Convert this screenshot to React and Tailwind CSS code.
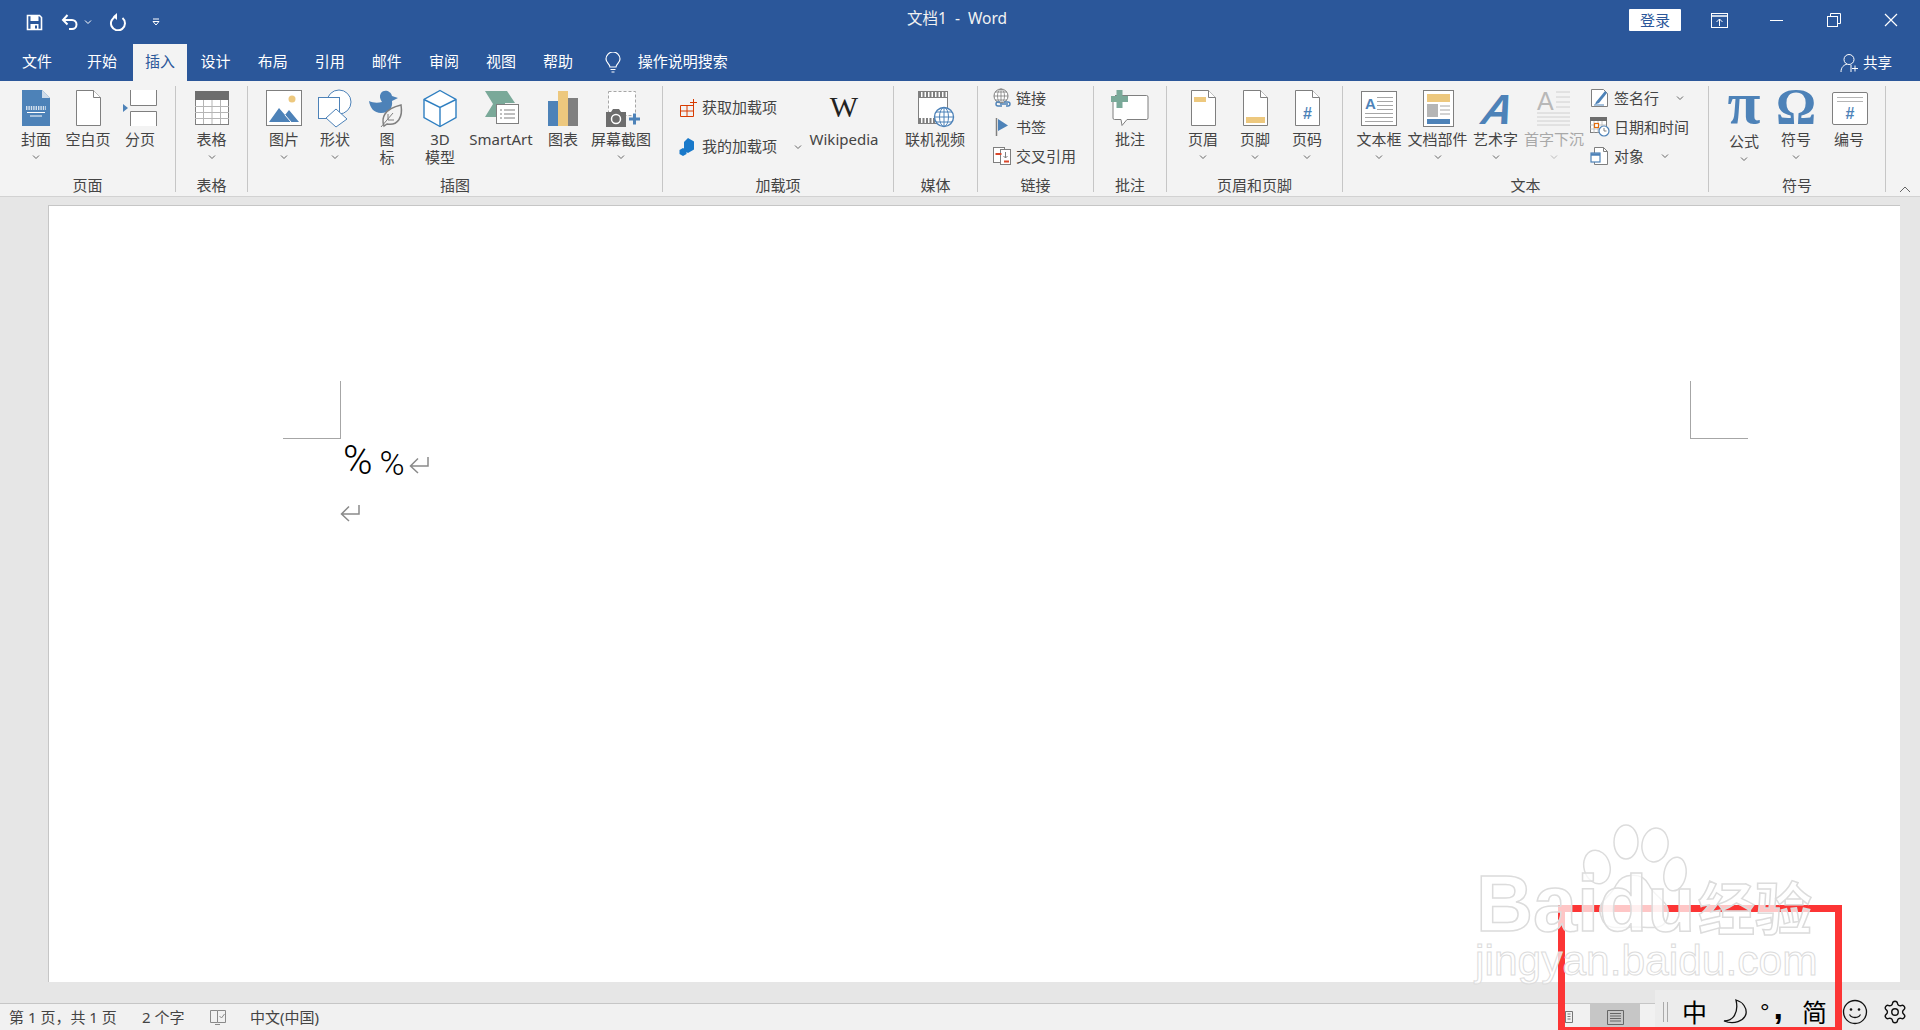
import React from "react";
import { Settings } from "lucide-react";

const BLUE = "#4d82b8";
const GRAY = "#7f7f7f";
const YELLOW = "#edc87e";
const GREEN = "#7aa999";

const tabs = ["设计", "布局", "引用", "邮件", "审阅", "视图", "帮助"];

const Svg = ({ size = 40, children }) => (
  <svg width={size} height={size} viewBox={`0 0 ${size} ${size}`} fill="none" className="shrink-0 overflow-visible">
    {children}
  </svg>
);

const Page = ({ fill = "#fff" }) => (
  <>
    <path d="M8.5 2.5h17l7 7v28h-24z" fill={fill} stroke={GRAY} />
    <path d="M25.5 2.5v7h7" fill="#fff" stroke={GRAY} />
  </>
);

const CoverIcon = () => (
  <Svg>
    <path d="M6 2h20l8 8v28H6z" fill={BLUE} />
    <path d="M26 2l8 8h-8z" fill="#cfdcea" />
    <path d="M10 19h20M10 21h20" stroke="#fff" strokeWidth="1.4" strokeDasharray="1.4 1" />
    <path d="M11 24.5h18M14 28h12" stroke="#fff" />
  </Svg>
);
const BlankIcon = () => <Svg><Page /></Svg>;
const BreakIcon = () => (
  <Svg>
    <path d="M10.5 2v15.5h26V2M10.5 38V23.5h26V38" fill="#fff" stroke={GRAY} />
    <path d="M3 16l5 4-5 4z" fill={BLUE} />
  </Svg>
);
const TableIcon = () => (
  <Svg>
    <rect x="3.5" y="3.5" width="33" height="33" fill="#fff" stroke={GRAY} />
    <rect x="3" y="3" width="34" height="9" fill="#6d6d6d" />
    <path d="M3 18.5h34M3 24.5h34M3 30.5h34M11.5 12v24M20 12v24M28.5 12v24" stroke="#b5b5b5" />
  </Svg>
);
const PictureIcon = () => (
  <Svg>
    <rect x="2.5" y="2.5" width="35" height="35" fill="#fff" stroke={GRAY} />
    <circle cx="28" cy="11" r="3.5" fill={YELLOW} />
    <path d="M5 34l10-14 6 7 4-5 10 12z" fill={BLUE} />
    <path d="M21 27l6 7" stroke="#fff" />
  </Svg>
);
const ShapesIcon = () => (
  <Svg>
    <circle cx="24" cy="14" r="12" fill="#fff" stroke={BLUE} />
    <rect x="3.5" y="9.5" width="21" height="21" fill="#fff" stroke={BLUE} />
    <path d="M21 21l11 10-11 8-10-9z" fill="#fff" stroke={BLUE} />
  </Svg>
);
const IconsIcon = () => (
  <Svg>
    <path d="M2 13c1 7 5 12 12 12 8 0 12-5 11-12l6-3-6-2c-1-5-8-7-11-3-2 3-1 6 1 9-4 1-9 1-13-1z" fill={BLUE} />
    <path d="M17 38c-3-8 0-17 17-21 2 12-3 21-14 19z" fill="#f3f3f3" stroke={GRAY} strokeWidth="1.5" />
    <path d="M14 39l12-14M21 32v-6M21 32h6" stroke={GRAY} />
  </Svg>
);
const CubeIcon = () => (
  <Svg>
    <path d="M20 2.5l16 9v18l-16 9-16-9v-18z" fill="#fff" stroke="#2f7fc1" strokeWidth="1.4" />
    <path d="M4 11.5l16 8 16-8M20 19.5v19" stroke="#2f7fc1" strokeWidth="1.4" />
  </Svg>
);
const SmartArtIcon = () => (
  <Svg>
    <path d="M4 3h22l8 12H24v14H4l8-13z" fill={GREEN} />
    <rect x="15.5" y="16.5" width="22" height="19" fill="#fff" stroke={GRAY} />
    <path d="M19 22h2M23 22h11M19 26h2M23 26h11M19 30h2M23 30h11" stroke={GRAY} />
  </Svg>
);
const ChartIcon = () => (
  <Svg>
    <rect x="5" y="13" width="10" height="25" fill={BLUE} />
    <rect x="15" y="3" width="10" height="35" fill={YELLOW} />
    <rect x="25" y="10" width="10" height="28" fill={GRAY} />
  </Svg>
);
const ScreenshotIcon = () => (
  <Svg>
    <rect x="7.5" y="3.5" width="27" height="24" fill="#fff" stroke="#a6a6a6" strokeDasharray="3 2" />
    <path d="M5 24h5l2-3h6l2 3h5v15H5z" fill="#6d6d6d" />
    <circle cx="15" cy="31" r="4.5" fill="#6d6d6d" stroke="#fff" strokeWidth="1.5" />
    <path d="M28 31h11M33.5 25.5v11" stroke={BLUE} strokeWidth="3" />
  </Svg>
);
const MediaIcon = () => (
  <Svg>
    <rect x="3.5" y="3.5" width="29" height="32" fill="#fff" stroke={GRAY} />
    <path d="M4 6.5h28M4 32.5h17" stroke={GRAY} strokeWidth="5" strokeDasharray="2 1.5" />
    <path d="M4 9.5h28" stroke={GRAY} />
    <circle cx="29" cy="29" r="9.5" fill="#fff" stroke={BLUE} strokeWidth="1.4" />
    <path d="M19.5 29h19M21 24h16M21 34h16M29 19.5v19" stroke={BLUE} />
    <ellipse cx="29" cy="29" rx="4.5" ry="9.5" stroke={BLUE} />
  </Svg>
);
const CommentIcon = () => (
  <Svg>
    <path d="M5 7.5h31.5a1.5 1.5 0 0 1 1.5 1.5v21a1.5 1.5 0 0 1-1.5 1.5H17l-5 6-1-6H4.5a1.5 1.5 0 0 1-1.5-1.5V9" fill="#fff" stroke={GRAY} />
    <path d="M1 11h17M9.5 2v18" stroke={GREEN} strokeWidth="6" />
  </Svg>
);
const HeaderIcon = () => (
  <Svg>
    <Page />
    <rect x="11" y="9" width="12" height="5" fill={YELLOW} />
  </Svg>
);
const FooterIcon = () => (
  <Svg>
    <Page />
    <rect x="11" y="29" width="19" height="6" fill={YELLOW} />
  </Svg>
);
const PageNumIcon = () => (
  <Svg>
    <Page />
    <text x="20.5" y="31" textAnchor="middle" fontSize="16" fontWeight="700" fill={BLUE} fontFamily="Liberation Sans">#</text>
  </Svg>
);
const TextBoxIcon = () => (
  <Svg>
    <rect x="2.5" y="3.5" width="35" height="34" fill="#fff" stroke={GRAY} />
    <text x="6" y="21" fontSize="15" fontWeight="700" fill={BLUE} fontFamily="Liberation Sans">A</text>
    <path d="M18 9.5h16M18 13.5h16M18 17.5h16M18 21.5h16M6 25.5h28M6 29.5h28M6 33.5h28" stroke="#a6a6a6" />
  </Svg>
);
const DocPartsIcon = () => (
  <Svg>
    <rect x="5.5" y="2.5" width="30" height="36" fill="#fff" stroke={GRAY} />
    <rect x="9" y="6" width="23" height="8" fill={YELLOW} />
    <rect x="9" y="16" width="11" height="13" fill="#b5b5b5" />
    <path d="M22 18h10M22 22h10M22 26h10" stroke="#a6a6a6" />
    <rect x="9" y="31" width="23" height="5" fill={BLUE} />
  </Svg>
);
const WordArtIcon = () => (
  <Svg>
    <text x="0" y="0" transform="translate(19 36) skewX(-12)" textAnchor="middle" fontSize="42" fontWeight="700" fontStyle="italic" fill={BLUE} fontFamily="Liberation Sans">A</text>
  </Svg>
);
const DropCapIcon = () => (
  <Svg>
    <text x="3" y="22" fontSize="25" fontWeight="400" fill="#b8b8b8" fontFamily="Liberation Sans">A</text>
    <path d="M22 4h14M22 9h14M22 14h14M22 19h14M3 25h33M3 29h33M3 33h33M3 37h33" stroke="#d0d0d0" />
  </Svg>
);
const PiIcon = () => (
  <Svg>
    <text x="20" y="35" textAnchor="middle" fontSize="60" fontWeight="700" fill={BLUE} fontFamily="Liberation Serif">π</text>
  </Svg>
);
const OmegaIcon = () => (
  <Svg>
    <text x="20" y="35" textAnchor="middle" fontSize="50" fontWeight="700" fill={BLUE} fontFamily="Liberation Serif">Ω</text>
  </Svg>
);
const NumberIcon = () => (
  <Svg>
    <rect x="3.5" y="4.5" width="35" height="32" rx="1.5" fill="#fff" stroke={GRAY} />
    <path d="M8 9.5h26M8 13.5h26" stroke="#b5b5b5" />
    <text x="21" y="31" textAnchor="middle" fontSize="16" fontWeight="700" fill={BLUE} fontFamily="Liberation Sans">#</text>
  </Svg>
);

const AddinIcon = () => (
  <Svg size={20}>
    <path d="M2.5 7.5h13v11h-13zM9 7.5v11M2.5 13h13" stroke="#d83b01" />
    <path d="M12 4.5h7M15.5 1v7" stroke="#d83b01" />
  </Svg>
);
const MyAddinIcon = () => (
  <Svg size={20}>
    <path d="M10 1l6 3.5v8l-6 3.5-4-2.3V5z" fill="#1979ca" />
    <path d="M5 11l3.5 2v4L5 19l-3.5-2v-4z" fill="#1979ca" />
  </Svg>
);
const LinkIcon = () => (
  <Svg size={20}>
    <circle cx="9" cy="8" r="7" fill="#fff" stroke={GRAY} />
    <path d="M2 8h14M3 4h12M3 12h12M9 1v14" stroke={GRAY} strokeWidth="0.8" />
    <ellipse cx="9" cy="8" rx="3.5" ry="7" stroke={GRAY} strokeWidth="0.8" />
    <path d="M8 14h-2a2 2 0 0 0 0 4h4M12 14h4a2 2 0 0 1 0 4h-2M8 16h8" stroke={BLUE} strokeWidth="1.4" />
  </Svg>
);
const BookmarkIcon = () => (
  <Svg size={20}>
    <path d="M4.5 1v18" stroke={GRAY} strokeWidth="1.5" />
    <path d="M6 2l10 6.5L6 14z" fill={BLUE} />
  </Svg>
);
const CrossRefIcon = () => (
  <Svg size={20}>
    <rect x="1.5" y="1.5" width="11" height="15" fill="#fff" stroke={GRAY} />
    <rect x="8.5" y="3.5" width="10" height="15" fill="#fff" stroke={GRAY} />
    <rect x="3.5" y="7" width="6" height="2" fill="#d9472b" />
    <rect x="12" y="14.5" width="5" height="2" fill="#d9472b" />
    <path d="M13.5 6v6M11.5 10l2 2 2-2" stroke={GRAY} />
  </Svg>
);
const SignatureIcon = () => (
  <Svg size={20}>
    <path d="M1.5 1.5h12l4 4v13h-16z" fill="#fff" stroke={GRAY} />
    <path d="M6 14L15 3l2 2-8 10-4 1.5z" fill={BLUE} />
    <path d="M4 17h10" stroke={BLUE} />
  </Svg>
);
const DateIcon = () => (
  <Svg size={20}>
    <rect x="0.5" y="0.5" width="16" height="15" fill="#fff" stroke={GRAY} />
    <rect x="0" y="0" width="17" height="4" fill="#6d6d6d" />
    <path d="M0 8h16M0 12h16M4 4v12M8 4v12M12 4v12" stroke="#b5b5b5" strokeWidth="0.8" />
    <rect x="4.5" y="6.5" width="4" height="4" fill="#fff" stroke="#e26b0a" strokeWidth="1.2" />
    <circle cx="14" cy="14" r="5" fill="#fff" stroke={BLUE} strokeWidth="1.2" />
    <path d="M14 11v3h2.5" stroke={GRAY} />
  </Svg>
);
const ObjectIcon = () => (
  <Svg size={20}>
    <path d="M4.5 1.5h9l4 4v13h-13z" fill="#fff" stroke={GRAY} />
    <path d="M13.5 1.5v4h4" stroke={GRAY} />
    <rect x="1" y="7" width="9" height="9" fill="#fff" stroke={BLUE} strokeWidth="1.2" />
    <path d="M1 8.5h9" stroke={BLUE} strokeWidth="2.5" />
  </Svg>
);

const Chevron = ({ className = "", color = "#666" }) => (
  <svg width="8" height="6" viewBox="0 0 8 6" fill="none" className={className}>
    <path d="M1 1.5l3 3 3-3" stroke={color} />
  </svg>
);

const RibbonItem = ({ w, icon, label, chevron, disabled, labelClass = "mt-[2px]" }) => (
  <div
    style={{ width: w }}
    className={`flex flex-col items-center shrink-0 pt-[2px] ${disabled ? "text-[#a8a8a8]" : ""}`}
  >
    {icon}
    <div className={`text-center leading-[18px] whitespace-nowrap ${labelClass}`}>
      {label.split("\n").map((line) => (
        <div key={line}>{line}</div>
      ))}
    </div>
    {chevron && <Chevron className="mt-[6px]" color={disabled ? "#bbb" : "#666"} />}
  </div>
);

const SmallItem = ({ icon, label, chevron, className = "h-6" }) => (
  <div className={`flex items-center gap-1 whitespace-nowrap ${className}`}>
    <span className="w-5 flex justify-center">{icon}</span>
    <span>{label}</span>
    {chevron && <Chevron className="ml-[13px]" />}
  </div>
);

const Group = ({ w, title, children, className = "" }) => (
  <div
    style={{ width: w }}
    className="flex flex-col shrink-0 h-[106px] mt-[5px] border-r border-[#c6c6c6]"
  >
    <div className={`flex-1 flex min-h-0 ${className}`}>{children}</div>
    <div className="h-[14px] leading-[14px] text-center whitespace-nowrap">{title}</div>
  </div>
);

const TitleBar = () => (
  <div className="h-11 grid grid-cols-[1fr_auto_1fr] text-white">
    <div className="flex items-center pl-[26px]">
      {/* quick access */}
      <svg width="17" height="17" viewBox="0 0 17 17" fill="none">
        <path d="M1.5 1.5h12l2 2v12h-14z" stroke="#fff" strokeWidth="1.6" />
        <rect x="4.5" y="2" width="8" height="5" fill="#fff" />
        <rect x="4.5" y="10" width="8" height="5" fill="#fff" />
        <rect x="9" y="11.5" width="2" height="3" fill="#2b579a" />
      </svg>
      <svg className="ml-[18px]" width="18" height="18" viewBox="0 0 18 18" fill="none">
        <path d="M2 7h9a4.5 4.5 0 0 1 0 9H8" stroke="#fff" strokeWidth="2" />
        <path d="M6.5 2L2 7l4.500 4.500" stroke="#fff" strokeWidth="2" />
      </svg>
      <Chevron className="ml-[5px]" color="#fff" />
      <svg className="ml-[17px]" width="18" height="18" viewBox="0 0 18 18" fill="none">
        <path d="M7.5 3.5a7 7 0 1 0 6 1.5" stroke="#fff" strokeWidth="2" />
        <path d="M8 0v7L4 3.5z" fill="#fff" />
      </svg>
      <svg className="ml-[25px]" width="8" height="8" viewBox="0 0 8 8" fill="none">
        <path d="M1 1h6M1 3.5h6l-3 3.5z" stroke="#fff" />
      </svg>
    </div>
    <div className="flex items-center text-[15.5px] pb-[7px] whitespace-pre text-[#f2f2f2] -ml-[3px] mr-[3px]">文档1  -  Word</div>
    <div className="flex items-center justify-end">
      <div className="w-[52px] h-[22px] bg-white rounded-[1px] text-[#2b579a] text-[15px] leading-[22px] text-center mb-[4px]">
        登录
      </div>
      <div className="w-[57px] flex justify-center ml-[10px] mb-[4px]">
        <svg width="17" height="15" viewBox="0 0 17 15" fill="none">
          <rect x="0.5" y="0.5" width="16" height="14" stroke="#fff" />
          <path d="M1 3h15" stroke="#fff" strokeWidth="1.5" />
          <path d="M8.5 13V6M5.5 9l3-3 3 3" stroke="#fff" />
        </svg>
      </div>
      <div className="w-[57px] flex justify-center mb-[4px]">
        <div className="w-[13px] h-px bg-white" />
      </div>
      <div className="w-[57px] flex justify-center mb-[4px]">
        <svg width="14" height="14" viewBox="0 0 14 14" fill="none">
          <rect x="0.5" y="3.5" width="10" height="10" stroke="#fff" />
          <path d="M3.5 3.5v-3h10v10h-3" stroke="#fff" />
        </svg>
      </div>
      <div className="w-[58px] flex justify-center mb-[4px]">
        <svg width="14" height="14" viewBox="0 0 14 14" fill="none">
          <path d="M1 1l12 12M13 1L1 13" stroke="#fff" strokeWidth="1.2" />
        </svg>
      </div>
    </div>
  </div>
);

const TabBar = () => (
  <div className="h-[37px] flex text-white text-[15px] leading-[35px]">
    <div className="w-[74px] text-center">文件</div>
    <div className="w-[59px] pr-[3px] text-center">开始</div>
    <div className="w-[54px] text-center bg-[#f3f3f3] text-[#2b579a]">插入</div>
    {tabs.map((t) => (
      <div key={t} className="w-[57.1px] text-center">
        {t}
      </div>
    ))}
    <div className="flex items-center ml-[18px] mr-[17px]">
      <svg width="16" height="22" viewBox="0 0 16 22" fill="none">
        <path d="M5 15c0-3-4-4-4-8a7 7 0 0 1 14 0c0 4-4 5-4 8z" stroke="#fff" strokeWidth="1.2" />
        <path d="M5.5 17.5h5M6.5 20h3" stroke="#fff" strokeWidth="1.2" />
      </svg>
    </div>
    <div>操作说明搜索</div>
    <div className="ml-auto flex items-center pr-[28px]">
      <svg width="20" height="20" viewBox="0 0 20 20" fill="none" className="mr-[3px]">
        <circle cx="9" cy="6.5" r="5" stroke="#fff" />
        <path d="M1 19c0-5 3-7 6-8M11 12v7M15 12.5v6M12 15.5h6" stroke="#fff" />
      </svg>
      <span className="text-[14.5px]">共享</span>
    </div>
  </div>
);

const Ribbon = () => (
  <div className="h-[116px] bg-[#f3f3f3] border-b border-[#d2d2d2] flex text-[#444] text-[15px] relative shrink-0">
    <Group w={176} title="页面" className="pl-[10px]">
      <RibbonItem w={52} icon={<CoverIcon />} label="封面" chevron />
      <RibbonItem w={52} icon={<BlankIcon />} label="空白页" />
      <RibbonItem w={52} icon={<BreakIcon />} label="分页" />
    </Group>
    <Group w={72} title="表格">
      <RibbonItem w={71} icon={<TableIcon />} label="表格" chevron />
    </Group>
    <Group w={415} title="插图" className="pl-[11px]">
      <RibbonItem w={50} icon={<PictureIcon />} label="图片" chevron />
      <RibbonItem w={52} icon={<ShapesIcon />} label="形状" chevron />
      <RibbonItem w={52} icon={<IconsIcon />} label={"图\n标"} />
      <RibbonItem w={54} icon={<CubeIcon />} label={"3D\n模型"} />
      <RibbonItem w={68} icon={<SmartArtIcon />} label="SmartArt" />
      <RibbonItem w={56} icon={<ChartIcon />} label="图表" />
      <RibbonItem w={60} icon={<ScreenshotIcon />} label="屏幕截图" chevron />
    </Group>
    <Group w={231} title="加载项">
      <div className="w-[143px] shrink-0 pl-[15px] pt-[2px]">
        <SmallItem className="h-[39px]" icon={<AddinIcon />} label="获取加载项" />
        <SmallItem className="h-[39px]" icon={<MyAddinIcon />} label="我的加载项" chevron />
      </div>
      <RibbonItem
        w={76}
        icon={
          <Svg>
            <text x="20" y="29" textAnchor="middle" fontSize="30" fill="#222" fontFamily="Liberation Serif">W</text>
          </Svg>
        }
        label="Wikipedia"
      />
    </Group>
    <Group w={84} title="媒体">
      <RibbonItem w={82} icon={<MediaIcon />} label="联机视频" />
    </Group>
    <Group w={116} title="链接">
      <div className="flex flex-col gap-[5px] pl-[14px]">
        <SmallItem icon={<LinkIcon />} label="链接" />
        <SmallItem icon={<BookmarkIcon />} label="书签" />
        <SmallItem icon={<CrossRefIcon />} label="交叉引用" />
      </div>
    </Group>
    <Group w={73} title="批注">
      <RibbonItem w={72} icon={<CommentIcon />} label="批注" />
    </Group>
    <Group w={176} title="页眉和页脚" className="pl-[10px]">
      <RibbonItem w={52} icon={<HeaderIcon />} label="页眉" chevron />
      <RibbonItem w={52} icon={<FooterIcon />} label="页脚" chevron />
      <RibbonItem w={52} icon={<PageNumIcon />} label="页码" chevron />
    </Group>
    <Group w={366} title="文本" className="pl-[7px]">
      <RibbonItem w={58} icon={<TextBoxIcon />} label="文本框" chevron />
      <RibbonItem w={59} icon={<DocPartsIcon />} label="文档部件" chevron />
      <RibbonItem w={57} icon={<WordArtIcon />} label="艺术字" chevron />
      <RibbonItem w={60} icon={<DropCapIcon />} label="首字下沉" chevron disabled />
      <div className="flex flex-col gap-[5px] pl-[6px]">
        <SmallItem icon={<SignatureIcon />} label="签名行" chevron />
        <SmallItem icon={<DateIcon />} label="日期和时间" />
        <SmallItem icon={<ObjectIcon />} label="对象" chevron />
      </div>
    </Group>
    <Group w={177} title="符号" className="pl-[9px]">
      <RibbonItem w={52} icon={<PiIcon />} label="公式" chevron labelClass="mt-[4px]" />
      <RibbonItem w={52} icon={<OmegaIcon />} label="符号" chevron />
      <RibbonItem w={54} icon={<NumberIcon />} label="编号" />
    </Group>
    <div className="flex-1 flex justify-end items-end pb-[3px] pr-[9px]">
      <svg width="12" height="7" viewBox="0 0 12 7" fill="none">
        <path d="M1 6l5-5 5 5" stroke="#666" />
      </svg>
    </div>
  </div>
);

const ReturnMark = ({ className = "" }) => (
  <svg width="20" height="18" viewBox="0 0 20 18" fill="none" className={className}>
    <path d="M19 1v9H2M9 2.5L1.5 10 9 17" stroke="#8a8a8a" strokeWidth="1.5" />
  </svg>
);

const Document = () => (
  <div className="flex-1 bg-[#e6e6e6] pt-[8px] pb-[21px] pl-[48px] pr-[20px] min-h-0">
    <div className="h-full bg-white border-l border-t border-[#c6c6c6] relative pl-[294px] pt-[234px] font-['Roboto','Noto_Sans',sans-serif] font-light text-black">
      {/* crop marks */}
      <div className="absolute left-[234px] top-[175px] w-[58px] h-[58px] border-r border-b border-[#a6a6a6]" />
      <div className="absolute left-[1641px] top-[175px] w-[58px] h-[58px] border-l border-b border-[#a6a6a6]" />
      <div className="flex items-end h-[42px]">
        <span className="text-[40px] leading-[42px]">%</span>
        <span className="text-[34px] leading-[38px] ml-[7px]">%</span>
        <ReturnMark className="ml-[4px] mb-[8px]" />
      </div>
      <ReturnMark className="-ml-[3px] mt-[22px]" />
    </div>
  </div>
);

const StatusBar = () => (
  <div className="h-[27px] bg-[#f1f1f1] border-t border-[#c6c6c6] flex items-center text-[#444] text-[15px] shrink-0">
    <span className="ml-[9px] w-[133px] whitespace-pre">第 1 页，共 1 页</span>
    <span className="w-[67px] whitespace-pre">2 个字</span>
    <svg width="18" height="16" viewBox="0 0 18 16" fill="none" className="mr-[23px]">
      <path d="M8.5 13.5h-7v-12h7zM8.5 13.5h8v-12h-8M6 15.5h5" stroke="#8a8a8a" />
      <path d="M10.5 7l2 2 3-4" stroke="#8a8a8a" />
    </svg>
    <span>中文(中国)</span>
    <div className="ml-auto flex items-center self-stretch mr-[280px]">
      <svg width="17" height="14" viewBox="0 0 17 14" fill="none" className="mr-[16px]">
        <path d="M8.5 1.5h-7v11h7zM8.5 1.5h7v11h-7M10.5 4h3M10.5 6.5h3M10.5 9h3" stroke="#777" />
      </svg>
      <div className="w-[50px] self-stretch bg-[#c6c6c6] flex items-center justify-center">
        <svg width="17" height="15" viewBox="0 0 17 15" fill="none">
          <path d="M.5.5h16v14H.5zM3 3.5h11M3 6h11M3 8.5h11M3 11h11" stroke="#666" />
        </svg>
      </div>
    </div>
  </div>
);

const ImeBar = () => (
  <div className="absolute right-0 bottom-0 w-[265px] h-[40px] bg-[#ececec] flex items-center text-black pt-[4px]">
    <div className="ml-[8px] w-[5px] h-5 border-x border-[#aaa]" />
    <span className="ml-[14px] w-[40px] text-[25px] font-['Noto_Sans_CJK_SC',sans-serif]">中</span>
    <svg width="26" height="26" viewBox="0 0 26 26" fill="none">
      <path d="M14 1c7 2 11 8 10 14-2 7-12 11-22 7 9 0 15-8 12-21z" stroke="#111" strokeWidth="1.3" />
    </svg>
    <span className="ml-[12px] w-[34px] flex items-start text-[24px] leading-none font-['Liberation_Sans',sans-serif]">
      <span>°</span>
      <span className="font-bold text-[34px] ml-[4px] mt-[-10px]">,</span>
    </span>
    <span className="ml-[8px] w-[38px] text-[25px] font-['Noto_Sans_CJK_SC',sans-serif]">简</span>
    <svg width="26" height="26" viewBox="0 0 26 26" fill="none" className="ml-[2px]">
      <circle cx="13" cy="13" r="11.5" stroke="#111" strokeWidth="1.3" />
      <circle cx="9" cy="10.5" r="1.3" fill="#111" />
      <circle cx="17" cy="10.5" r="1.3" fill="#111" />
      <path d="M7.5 15.5c2 4 9 4 11 0" stroke="#111" strokeWidth="1.3" />
    </svg>
    <Settings size={26} strokeWidth={1.3} className="ml-[14px] text-[#111]" />
  </div>
);

const Watermark = () => (
  <div className="absolute inset-0 pointer-events-none text-[#ffffffb8] font-['Liberation_Sans',sans-serif] font-bold">
    <svg className="absolute left-[1580px] top-[824px]" width="110" height="115" viewBox="0 0 110 115" fill="#ffffffb8" stroke="#dcdcdc" strokeWidth="1.5">
      <ellipse cx="17" cy="43" rx="13" ry="17" transform="rotate(-15 17 43)" />
      <ellipse cx="46" cy="18" rx="12" ry="17" />
      <ellipse cx="75" cy="21" rx="13" ry="17" transform="rotate(10 75 21)" />
      <ellipse cx="95" cy="50" rx="11" ry="17" transform="rotate(10 95 50)" />
      <path d="M22 95c-8-18 8-20 14-34 6-12 26-14 33 0 6 14 24 16 18 34-4 12-18 8-32 8s-29 4-33-8z" />
    </svg>
    <span className="absolute left-[1476px] top-[860px] text-[79px] leading-[88px] whitespace-nowrap [-webkit-text-stroke:1.5px_#dcdcdc]">Baidu</span>
    <span className="absolute left-[1698px] top-[872px] text-[57px] leading-[66px] whitespace-nowrap font-['Noto_Sans_CJK_SC',sans-serif] [-webkit-text-stroke:1.5px_#dcdcdc]">经验</span>
    <span className="absolute left-[1475px] top-[938px] text-[42.5px] leading-[46px] font-normal whitespace-nowrap [-webkit-text-stroke:1px_#dcdcdc]">jingyan.baidu.com</span>
  </div>
);

export default function App() {
  return (
    <div className="h-screen w-full flex flex-col bg-[#2b579a] relative overflow-hidden font-['Noto_Sans','Noto_Sans_CJK_SC',sans-serif]">
      <TitleBar />
      <TabBar />
      <Ribbon />
      <Document />
      <StatusBar />
      <ImeBar />
      {/* red annotation box */}
      <div className="absolute left-[1558px] top-[905px] w-[284px] h-[125px] border-[7px] border-b-[3px] border-[#fc3535]" />
      <Watermark />
    </div>
  );
}
